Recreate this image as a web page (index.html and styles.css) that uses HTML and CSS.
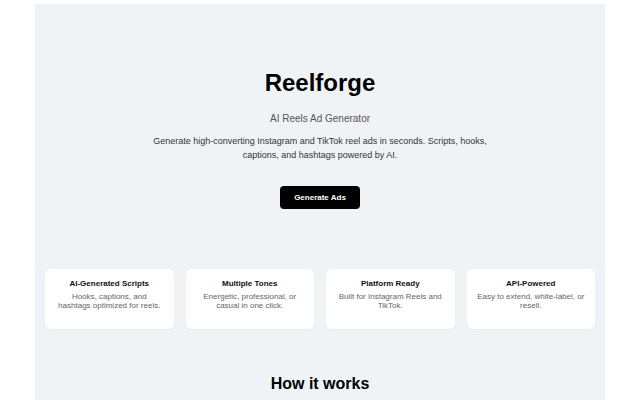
FILE: index.html
```html
<!DOCTYPE html>
<html lang="en">
<head>
<meta charset="utf-8">
<title>Reelforge</title>
<link rel="stylesheet" href="styles.css">
</head>
<body>
<main class="page">
  <section class="hero">
    <h1 class="title">Reelforge</h1>
    <p class="subtitle">AI Reels Ad Generator</p>
    <p class="desc">Generate high-converting Instagram and TikTok reel ads in seconds. Scripts, hooks, captions, and hashtags powered by AI.</p>
    <button class="cta" type="button">Generate Ads</button>
  </section>
  <section class="features">
    <div class="card">
      <h3 class="card-title">AI-Generated Scripts</h3>
      <p class="card-text">Hooks, captions, and hashtags optimized for reels.</p>
    </div>
    <div class="card">
      <h3 class="card-title">Multiple Tones</h3>
      <p class="card-text">Energetic, professional, or casual in one click.</p>
    </div>
    <div class="card">
      <h3 class="card-title">Platform Ready</h3>
      <p class="card-text">Built for Instagram Reels and TikTok.</p>
    </div>
    <div class="card">
      <h3 class="card-title">API-Powered</h3>
      <p class="card-text">Easy to extend, white-label, or resell.</p>
    </div>
  </section>
  <section class="how">
    <h2 class="how-title">How it works</h2>
  </section>
</main>
</body>
</html>
```

FILE: styles.css
```css
* { box-sizing: border-box; }
html, body { margin: 0; padding: 0; background: #ffffff; }
body {
  font-family: "Liberation Sans", Arial, sans-serif;
  color: #111111;
}
.page {
  width: 570px;
  margin: 4px auto 0;
  background: #f0f3f6;
  padding: 65px 10px 40px;
}
.hero {
  text-align: center;
  display: flex;
  flex-direction: column;
  align-items: center;
}
.title {
  margin: 0;
  font-size: 24px;
  line-height: 28.8px;
  font-weight: 700;
  color: #000000;
}
.subtitle {
  margin: 14px 0 0;
  font-size: 10px;
  line-height: 14px;
  color: #555555;
}
.desc {
  margin: 8px 0 0;
  max-width: 360px;
  font-size: 9px;
  line-height: 14px;
  color: #333333;
}
.cta {
  margin-top: 24px;
  width: 80px;
  height: 23px;
  padding: 0;
  border: none;
  border-radius: 4px;
  background: #000000;
  color: #ffffff;
  font-family: "Liberation Sans", Arial, sans-serif;
  font-size: 8px;
  font-weight: 700;
  line-height: 9px;
}
.features {
  margin-top: 60px;
  display: grid;
  grid-template-columns: repeat(4, 1fr);
  gap: 12px;
}
.card {
  background: #ffffff;
  border-radius: 6px;
  padding: 10px 10px 19px;
  text-align: center;
  box-shadow: 0 1px 2px rgba(0, 0, 0, 0.03);
}
.card-title {
  margin: 0;
  font-size: 8px;
  line-height: 10px;
  font-weight: 700;
  color: #111111;
}
.card-text {
  margin: 3px 0 0;
  font-size: 8px;
  line-height: 9px;
  color: #666666;
}
.how {
  margin-top: 45px;
  text-align: center;
}
.how-title {
  margin: 0;
  font-size: 16px;
  line-height: 19.2px;
  font-weight: 700;
  color: #000000;
}
```
